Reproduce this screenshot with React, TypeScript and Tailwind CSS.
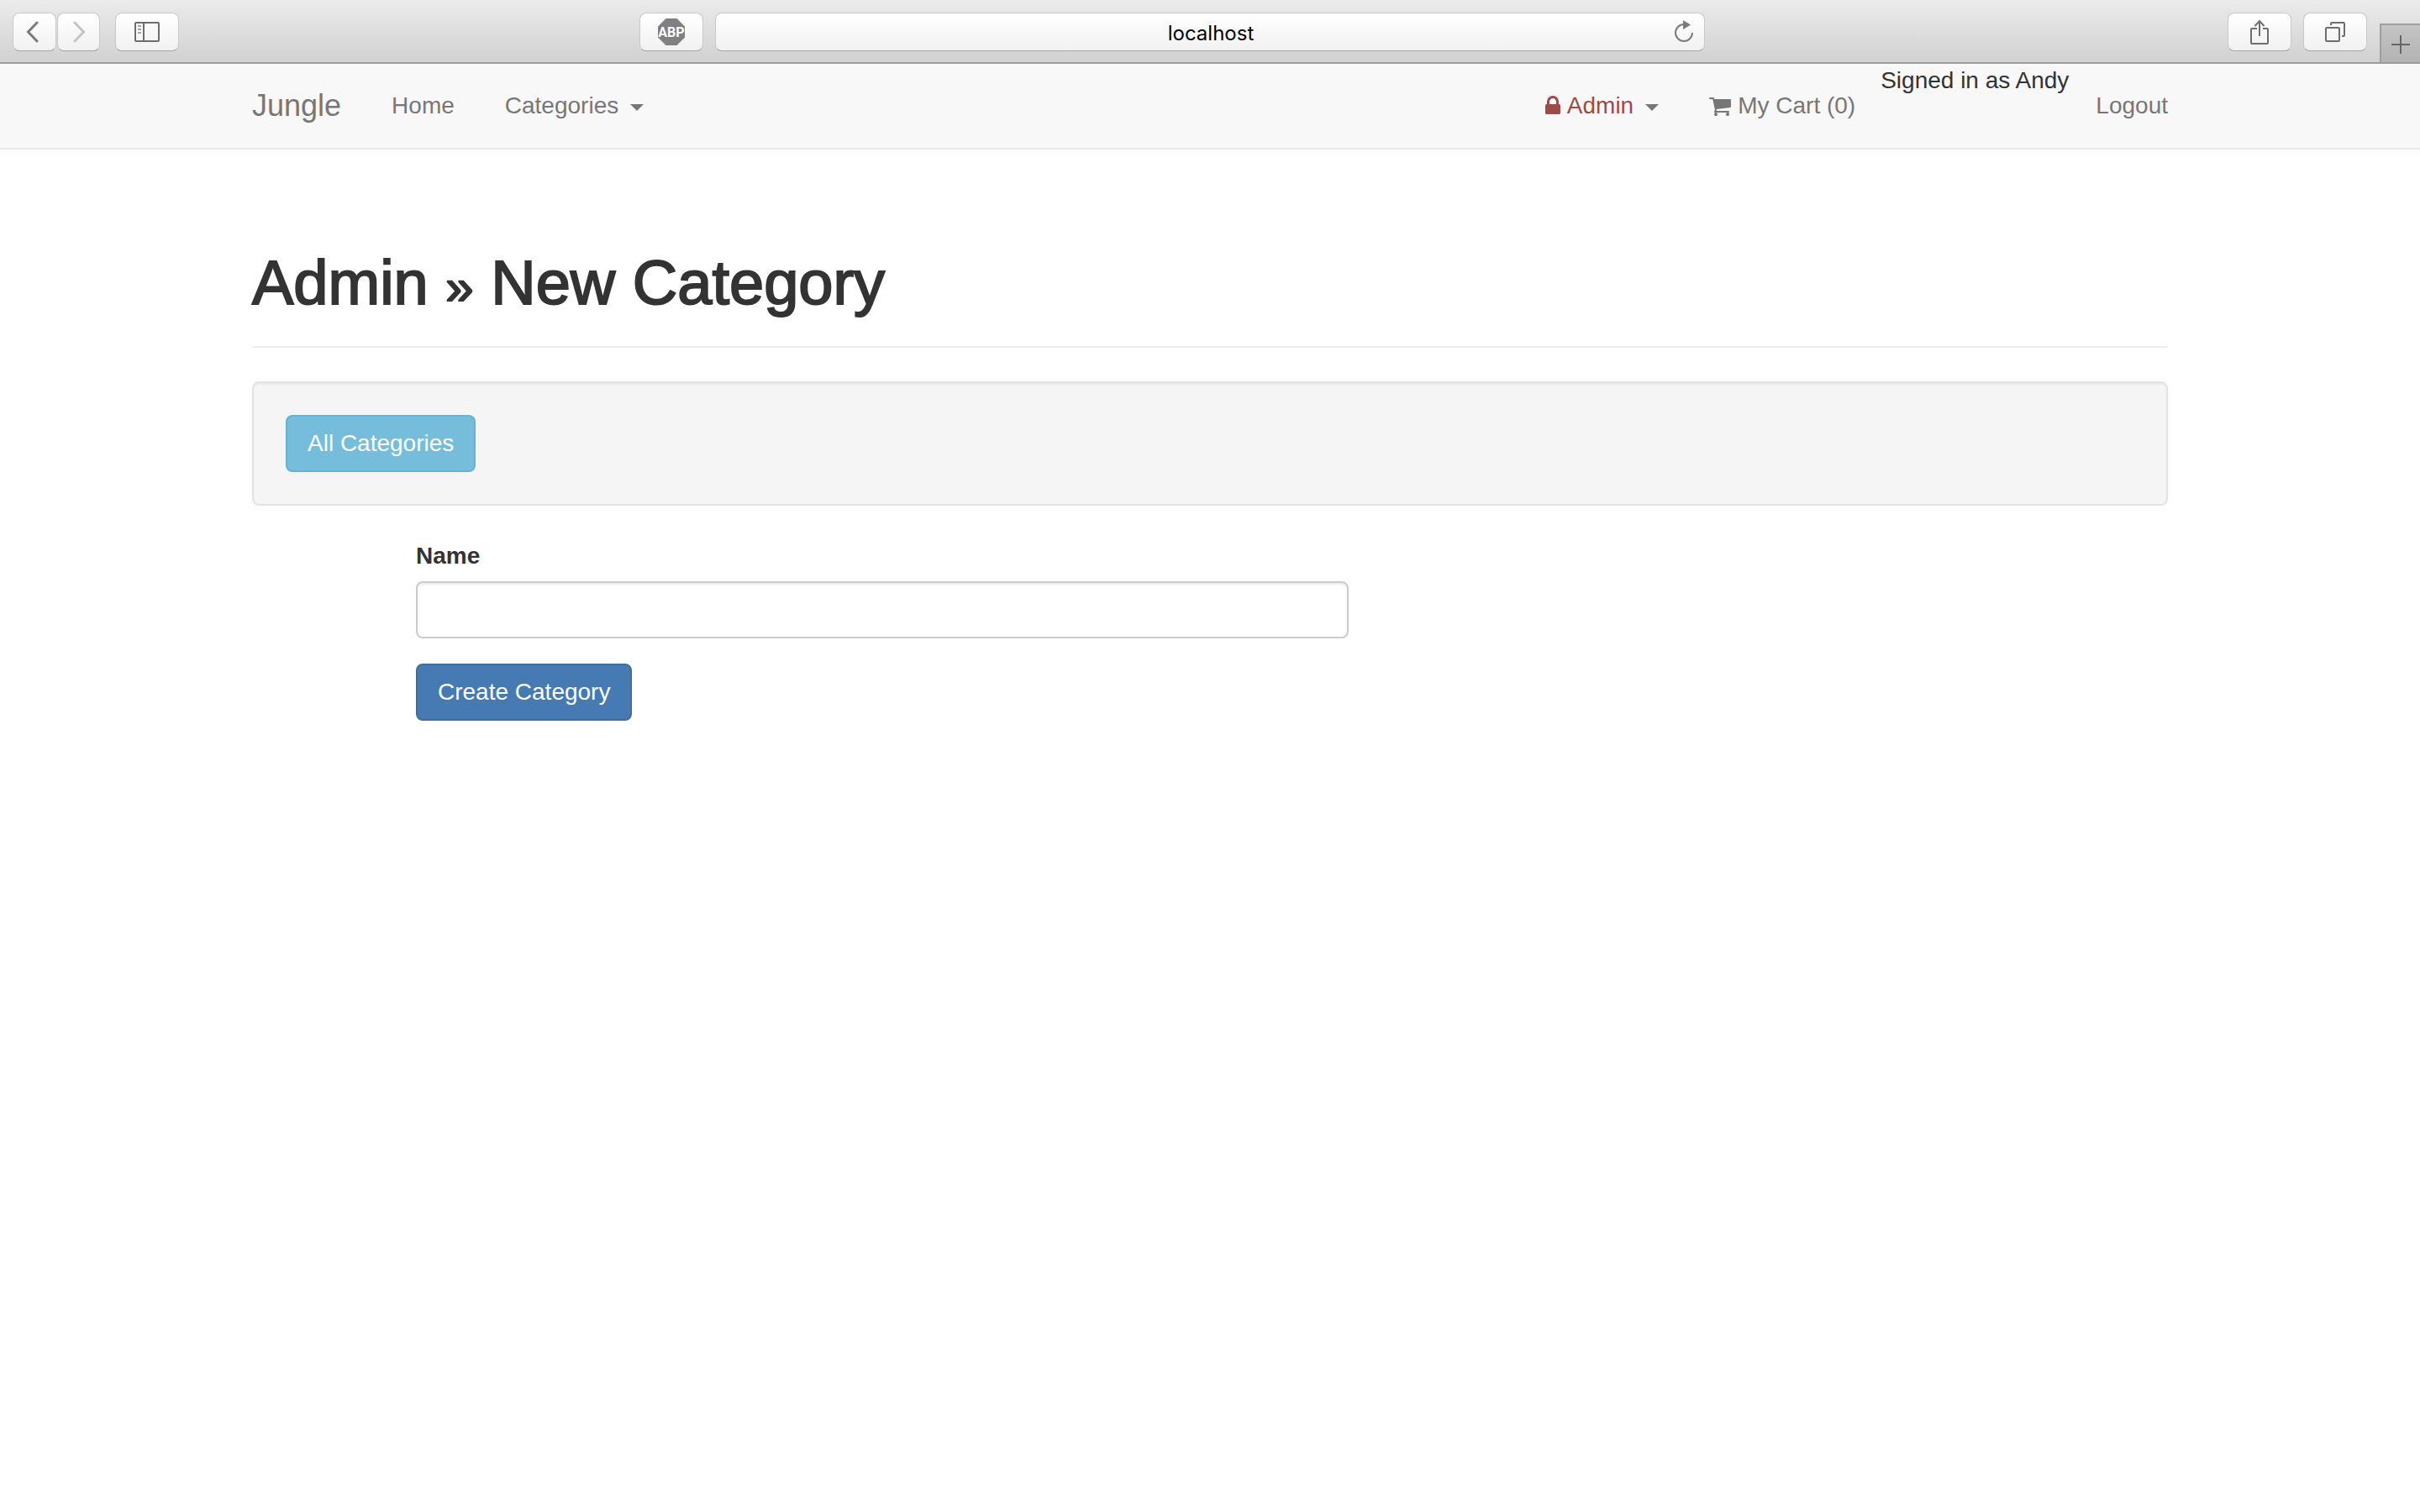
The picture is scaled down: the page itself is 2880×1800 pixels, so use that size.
import type { ReactNode } from "react";

const toolButton =
  "flex h-[46px] items-center justify-center rounded-lg border border-[#c9c9c9] border-b-[#a3a3a3] bg-linear-to-b from-white to-[#f1f1f1] text-[#6e6e6e]";

function ToolButton({ label, className, children }: { label: string; className: string; children: ReactNode }) {
  return (
    <button type="button" aria-label={label} className={`${toolButton} ${className}`}>
      {children}
    </button>
  );
}

function BrowserBar() {
  return (
    <div className="grid h-[76px] grid-cols-[1fr_minmax(0,1178px)_1fr] border-b-2 border-[#9c9c9c] bg-linear-to-b from-[#ebebeb] to-[#d1d1d1] font-[Inter,sans-serif]">
      <div className="flex items-start pt-[15px] pr-[14px] pl-[15px]">
        <ToolButton label="Back" className="w-[52px] pr-1">
          <svg width="16" height="26" viewBox="0 0 16 26" fill="none" stroke="#7b7b7b" strokeWidth="3" strokeLinecap="round">
            <path d="M13 2 2.500 13 13 24" />
          </svg>
        </ToolButton>
        <ToolButton label="Forward" className="ml-px w-[51px]">
          <svg width="16" height="26" viewBox="0 0 16 26" fill="none" stroke="#c4c4c4" strokeWidth="3" strokeLinecap="round">
            <path d="M3 2 13.500 13 3 24" />
          </svg>
        </ToolButton>
        <ToolButton label="Sidebar" className="ml-[18px] w-[76px]">
          <svg width="30" height="24" viewBox="0 0 30 24" fill="none" stroke="#6e6e6e" strokeWidth="2">
            <rect x="1" y="1" width="28" height="22" rx="1" />
            <path d="M11 1v22" />
            <path d="M4 5h4M4 9h4M4 13h4" stroke="#a0a0a0" />
          </svg>
        </ToolButton>
        <ToolButton label="Adblock Plus" className="ml-auto w-[76px]">
          <svg width="32" height="32" viewBox="0 0 32 32">
            <path d="M9.500 0h13L32 9.500v13L22.500 32h-13L0 22.500v-13z" fill="#808080" />
            <text x="16" y="22" textAnchor="middle" fontFamily="Liberation Sans Narrow, Roboto, sans-serif" fontWeight="700" fontSize="16" fill="#fff">
              ABP
            </text>
          </svg>
        </ToolButton>
      </div>
      <div className="relative pt-[15px]">
        <input
          aria-label="Address"
          defaultValue="localhost"
          className="h-[46px] w-full rounded-lg border border-[#c9c9c9] border-b-[#a3a3a3] bg-linear-to-b from-white to-[#f1f1f1] pt-0.5 pl-0.5 text-center text-[24px] text-black"
        />
        <button type="button" aria-label="Reload" className="absolute top-[22px] right-[13px]">
          <svg width="24" height="30" viewBox="0 0 24 30" fill="none">
            <path d="M12 7A10 10 0 1 0 22 17" stroke="#7b7b7b" strokeWidth="2" />
            <path d="M11 2v11l9-5.500z" fill="#7b7b7b" />
          </svg>
        </button>
      </div>
      <div className="flex items-start justify-end pt-[15px]">
        <ToolButton label="Share" className="w-[76px]">
          <svg width="24" height="32" viewBox="0 0 24 32" fill="none" stroke="#6e6e6e" strokeWidth="2">
            <path d="M9 12H3a1 1 0 0 0-1 1v16a1 1 0 0 0 1 1h18a1 1 0 0 0 1-1V13a1 1 0 0 0-1-1h-5M12 21V3M6.500 9 12 3l5.500 6" />
          </svg>
        </ToolButton>
        <ToolButton label="Tabs" className="ml-[14px] w-[76px]">
          <svg width="24" height="24" viewBox="0 0 24 24" fill="none" stroke="#6e6e6e" strokeWidth="2">
            <rect x="1" y="7" width="16" height="16" rx="1" />
            <path d="M7 4V2a1 1 0 0 1 1-1h14a1 1 0 0 1 1 1v14a1 1 0 0 1-1 1h-2" />
          </svg>
        </ToolButton>
        <button
          type="button"
          aria-label="New tab"
          className="mt-[13px] ml-[15px] flex h-[46px] w-12 items-center justify-center border-t-2 border-l-2 border-[#9f9f9f] bg-linear-to-b from-[#c4c4c4] to-[#b3b3b3] pt-0.5"
        >
          <svg width="22" height="22" viewBox="0 0 22 22" stroke="#666" strokeWidth="2">
            <path d="M11 0v22M0 11h22" />
          </svg>
        </button>
      </div>
    </div>
  );
}

function Caret() {
  return (
    <svg width="16" height="8" viewBox="0 0 16 8" fill="#777" className="mt-1 ml-[14px]">
      <path d="M0 0h16L8 8z" />
    </svg>
  );
}

function NavBar() {
  return (
    <nav className="border-b-2 border-[#e7e7e7] bg-[#f8f8f8] text-[#777]">
      <div className="mx-auto flex h-[100px] max-w-[2340px] items-center px-[30px] leading-10">
        <a href="#" className="mr-[30px] text-[36px]">Jungle</a>
        <a href="#" className="px-[30px]">Home</a>
        <a href="#" className="flex items-center px-[30px]">
          Categories
          <Caret />
        </a>
        <a href="#" className="ml-auto flex items-center px-[30px] text-[#a04a47]">
          <svg width="18" height="28" viewBox="320 0 1152 1792" fill="currentColor" className="mr-2">
            <path d="M640 768h512v-192q0-106-75-181t-181-75-181 75-75 181v192zm832 96v576q0 40-28 68t-68 28h-960q-40 0-68-28t-28-68v-576q0-40 28-68t68-28h32v-192q0-184 132-316t316-132 316 132 132 316v192h32q40 0 68 28t28 68z" />
          </svg>
          Admin
          <Caret />
        </a>
        <a href="#" className="flex items-center pr-[30px] pl-[30px]">
          <svg width="26" height="28" viewBox="64 0 1664 1792" fill="currentColor" className="mr-2">
            <path d="M704 1536q0 52-38 90t-90 38-90-38-38-90 38-90 90-38 90 38 38 90zm896 0q0 52-38 90t-90 38-90-38-38-90 38-90 90-38 90 38 38 90zm128-1088v512q0 24-16.500 42.500t-40.500 21.500l-1044 122q13 60 13 70 0 16-24 64h920q26 0 45 19t19 45-19 45-45 19h-1024q-26 0-45-19t-19-45q0-11 8-31.500t16-36 21.500-40 15.500-29.500l-177-823h-204q-26 0-45-19t-19-45 19-45 45-19h256q16 0 28.500 6.500t19.500 15.500 13 24.500 8 26 5.500 29.500 4.500 26h1201q26 0 45 19t19 45z" />
          </svg>
          My Cart (0)
        </a>
        <span className="self-start text-[#333]">Signed in as Andy</span>
        <a href="#" className="pl-8">Logout</a>
      </div>
    </nav>
  );
}

export default function App() {
  return (
    <div className="min-h-screen bg-white font-['Liberation_Sans',Arial,sans-serif] text-[28px] leading-10 text-[#333]">
      <BrowserBar />
      <NavBar />
      <main className="mx-auto max-w-[2340px] px-[30px] pt-[116px]">
        <header className="border-b-2 border-[#eee] pb-8">
          <h1 className="text-[74px] leading-[86px] font-medium [-webkit-text-stroke:2px_#333]">
            Admin <span className="text-[60px] leading-none">»</span> New Category
          </h1>
        </header>
        <section className="mt-10 rounded-lg border-2 border-[#e3e3e3] bg-[#f5f5f5] p-[38px] shadow-[inset_0_2px_2px_rgba(0,0,0,0.05)]">
          <a
            href="#"
            className="flex h-[68px] w-fit items-center rounded-lg border-2 border-[#63b3d6] bg-[#75bddb] px-6 text-white"
          >
            All Categories
          </a>
        </section>
        <div className="-mx-[30px]">
          <form className="ml-[8.3333%] w-1/2 px-[30px] pt-10" onSubmit={(e) => e.preventDefault()}>
            <label htmlFor="name" className="block font-bold">Name</label>
            <input
              id="name"
              type="text"
              className="mt-[10px] block h-[68px] w-full rounded-lg border-2 border-[#ccc] bg-white px-6 shadow-[inset_0_2px_2px_rgba(0,0,0,0.075)]"
            />
            <button
              type="submit"
              className="mt-[30px] h-[68px] rounded-lg border-2 border-[#3d6da3] bg-[#457ab2] px-6 text-white"
            >
              Create Category
            </button>
          </form>
        </div>
      </main>
    </div>
  );
}
